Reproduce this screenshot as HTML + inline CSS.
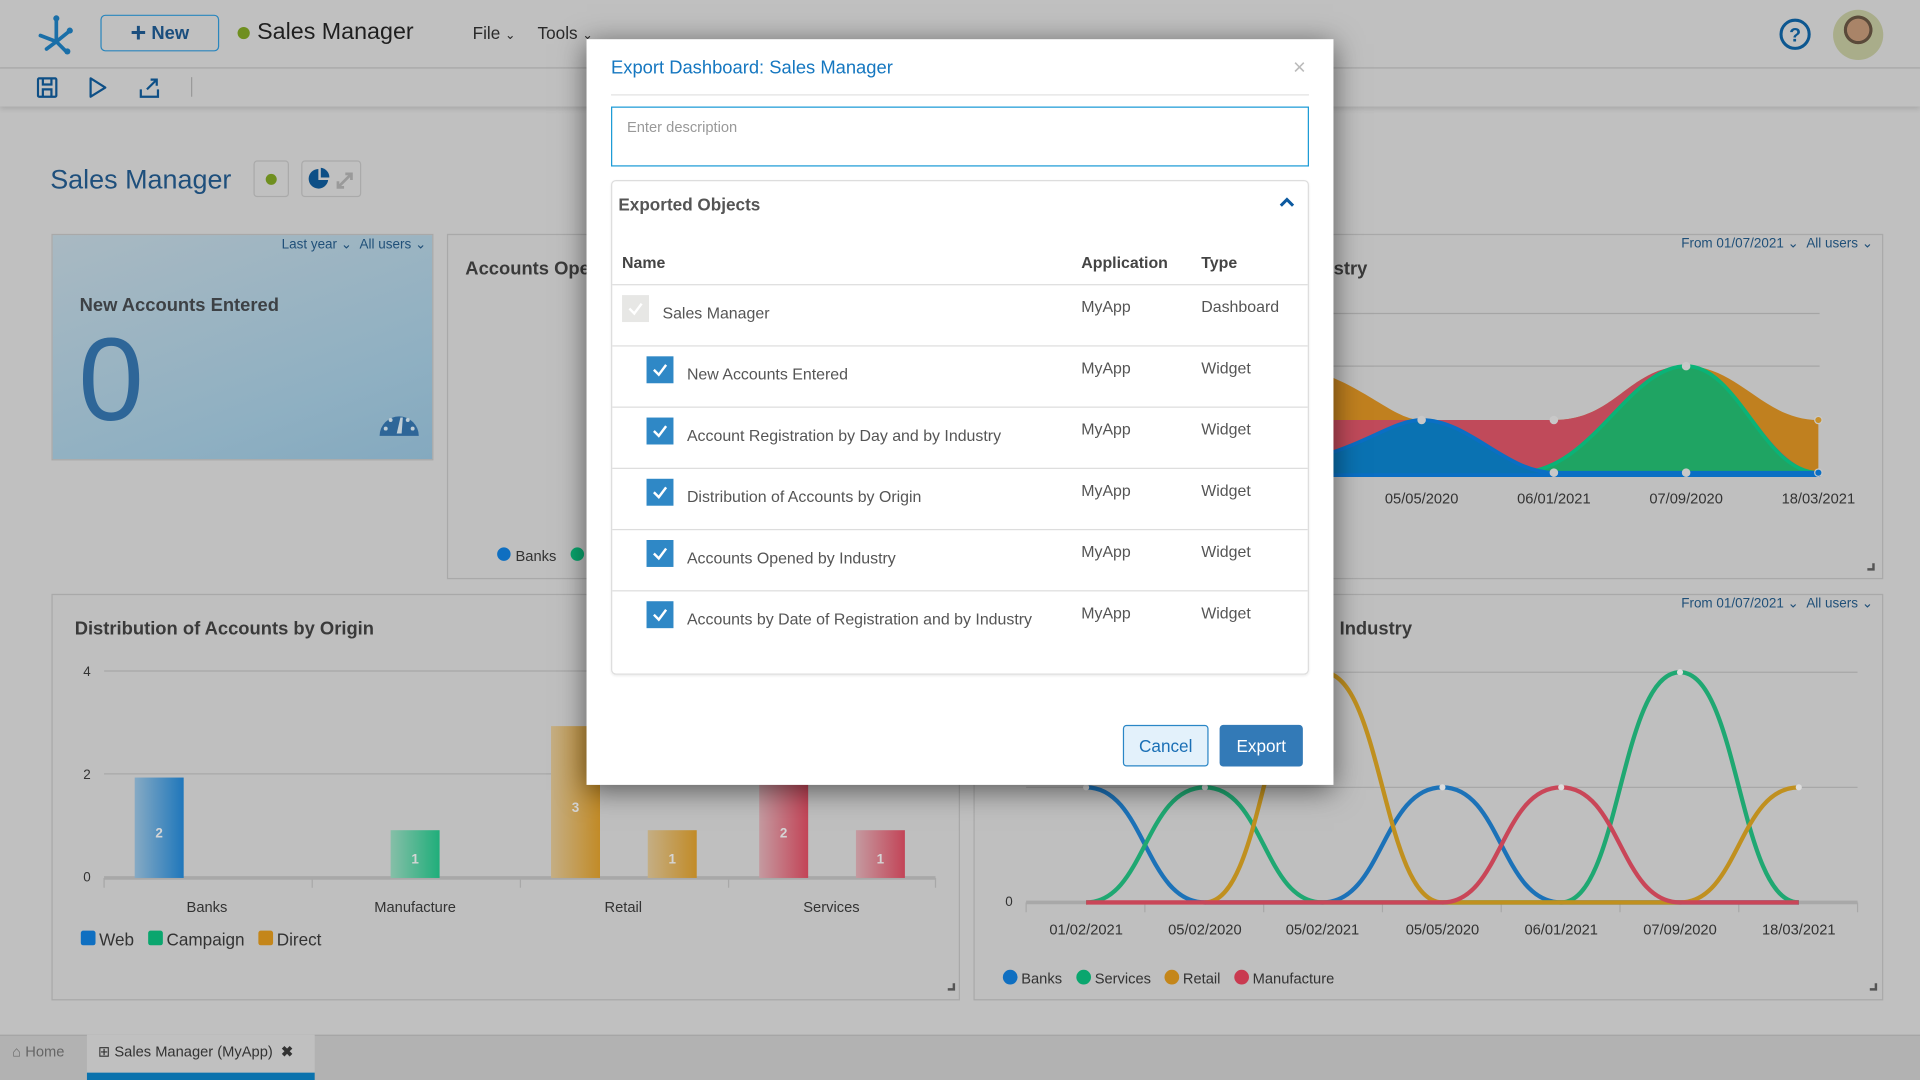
<!DOCTYPE html>
<html><head><meta charset="utf-8">
<style>
*{box-sizing:border-box;margin:0;padding:0}
html,body{width:1920px;height:1080px;overflow:hidden;background:#c0c0c0}
#w{position:absolute;left:0;top:0;width:1568px;height:882px;transform:scale(1.22449);transform-origin:0 0;background:#c0c0c0;font-family:"Liberation Sans",Arial,sans-serif;color:#333}
.a{position:absolute}
.box{position:absolute;border:1px solid #a9a9a9;background:#bfbfbf}
.lnk{position:absolute;font-size:11px;color:#1f4f78;white-space:nowrap}
.wt{position:absolute;font-size:15px;font-weight:bold;color:#3a3a3a;white-space:nowrap}
#modal{position:absolute;left:479px;top:32px;width:610px;height:609px;background:#fff;box-shadow:0 4px 22px rgba(0,0,0,.55)}
.row{position:absolute;left:0;width:568px;height:50px;border-top:1px solid #ddd;font-size:13px;color:#555;white-space:nowrap}
.cb{position:absolute;width:22px;height:22px;background:#2f88c6}
.cb svg{position:absolute;left:4px;top:5px}
.app{position:absolute;left:383px;top:10px}
.typ{position:absolute;left:481px;top:10px}
</style></head><body><div id="w">

<!-- top bar -->
<div class="a" style="left:0;top:55px;width:1568px;height:1px;background:#a8a8a8"></div>
<div class="a" style="left:0;top:56px;width:1568px;height:31px;background:#c0c0c0;box-shadow:0 2px 4px rgba(0,0,0,.12)"></div>
<svg class="a" style="left:28px;top:12px" width="36" height="34" viewBox="0 0 36 34">
<g stroke="#1a6fa8" stroke-width="3" fill="none" stroke-linecap="round"><path d="M18 3 V22"/><path d="M18 22 L5 17"/><path d="M18 22 L28 14"/><path d="M18 22 L26 30"/><path d="M18 22 L10 28"/></g>
<circle cx="18" cy="3" r="2.5" fill="#1a6fa8"/><circle cx="29" cy="13" r="2.5" fill="#1a6fa8"/><circle cx="27" cy="30" r="2.5" fill="#1a6fa8"/></svg>
<div class="a" style="left:82px;top:12px;width:97px;height:30px;border:1px solid #2a86bd;border-radius:4px;color:#1a4e7e;font-size:15px;line-height:28px;text-align:center;font-weight:bold"><span style="font-size:22px;vertical-align:-2px">+</span> New</div>
<div class="a" style="left:194px;top:22px;width:10px;height:10px;border-radius:50%;background:#6f8f1f"></div>
<div class="a" style="left:210px;top:16px;font-size:19px;color:#1f1f1f">Sales Manager</div>
<div class="a" style="left:386px;top:19px;font-size:14px;color:#2a2a2a">File <span style="font-size:10px">&#8964;</span></div>
<div class="a" style="left:439px;top:19px;font-size:14px;color:#2a2a2a">Tools <span style="font-size:10px">&#8964;</span></div>
<svg class="a" style="left:1452px;top:14px" width="28" height="28"><circle cx="14" cy="14" r="11.5" stroke="#0d5790" stroke-width="2.5" fill="none"/><text x="14" y="20" text-anchor="middle" font-size="16" font-weight="bold" fill="#0d5790" font-family="Liberation Sans">?</text></svg>
<div class="a" style="left:1497px;top:8px;width:41px;height:41px;border-radius:50%;background:radial-gradient(circle at 50% 40%,#a98468 0 28%,#5a4a3a 29% 36%,#a9ad8a 37%)"></div>
<!-- toolbar icons -->
<svg class="a" style="left:30px;top:62px" width="110" height="20"><g stroke="#0e4f86" stroke-width="1.8" fill="none"><rect x="1" y="2" width="15" height="15" rx="1"/><path d="M5 2v5h7V2M5 17v-6h7v6"/><path d="M44 2 L56 9.5 L44 17 Z" stroke-linejoin="round"/><path d="M85 11v6h14v-6M90 11 L98 3M93 3h5v5"/></g></svg>
<div class="a" style="left:156px;top:63px;width:1px;height:16px;background:#999"></div>

<!-- dashboard title -->
<div class="a" style="left:41px;top:134px;font-size:22px;color:#1e4f7c">Sales Manager</div>
<div class="a" style="left:207px;top:131px;width:29px;height:30px;border:1px solid #aaa;border-radius:3px"><div class="a" style="left:9px;top:10px;width:9px;height:9px;border-radius:50%;background:#6f8f1f"></div></div>
<div class="a" style="left:246px;top:131px;width:49px;height:30px;border:1px solid #aaa;border-radius:3px">
<svg class="a" style="left:2px;top:3px" width="42" height="22"><path d="M11 3 A8 8 0 1 0 19 12 L11 12 Z" fill="#0d4f86"/><path d="M13 2 A8 8 0 0 1 20 10 L13 10 Z" fill="#0d4f86"/><g stroke="#9a9a9a" stroke-width="2.2" fill="none"><path d="M27 18 L38 7M27 13v5h5M38 12V7h-5"/></g></svg></div>

<!-- widget 1 -->
<div class="box" style="left:42px;top:191px;width:312px;height:185px;background:linear-gradient(160deg,#a9b9c2,#8fb0c2 70%,#84a9bf)">
<div class="lnk" style="left:187px;top:1px">Last year &#8964; &nbsp;All users &#8964;</div>
<div class="wt" style="left:22px;top:49px;color:#3d4145">New Accounts Entered</div>
<div class="a" style="left:21px;top:64px;font-size:96px;color:#2e6698;line-height:110px">0</div>
<svg class="a" style="left:266px;top:138px" width="34" height="30"><path d="M1 26 A16 16 0 0 1 33 26 Z" fill="#2e6698"/><g fill="#bfcdd5"><circle cx="6" cy="20" r="1.6"/><circle cx="10" cy="13" r="1.6"/><circle cx="24" cy="13" r="1.6"/><circle cx="28" cy="20" r="1.6"/><path d="M15 24 L18 11 L20 11 L19 24 Z"/></g></svg>
</div>
<!-- widget 2 top middle / right -->
<div class="box" style="left:365px;top:191px;width:1173px;height:282px"></div>
<div class="wt" style="left:380px;top:211px">Accounts Ope</div>
<div class="a" style="left:406px;top:447px;width:11px;height:11px;border-radius:50%;background:#0f6fc1"></div>
<div class="a" style="left:421px;top:447px;font-size:12px">Banks</div>
<div class="a" style="left:466px;top:447px;width:11px;height:11px;border-radius:50%;background:#0aa66e"></div>
<div class="wt" style="left:1080px;top:211px">ustry</div>
<div class="lnk" style="left:1373px;top:192px">From 01/07/2021 &#8964; &nbsp;All users &#8964;</div>
<svg class="a" style="left:1000px;top:240px" width="540" height="240">
<g stroke="#a5a5a5" stroke-width="1"><path d="M89 16 H486 M89 59 H486"/></g>
<path d="M80 65 C120 80 140 103 161 103 L269 103 C320 103 330 59 377 59 C420 59 440 103 485 103 L485 146 L80 146 Z" fill="#c0801f"/>
<path d="M80 103 L161 103 L269 103 C320 103 330 59 377 59 C420 59 440 140 485 146 L80 146 Z" fill="#c04a5a"/>
<path d="M240 146 C300 146 330 59 377 59 C420 59 440 146 485 146 Z" fill="#1fa463" stroke="#0ab377" stroke-width="3"/>
<path d="M80 132 C120 120 140 103 161 103 C200 103 230 146 269 146 L485 146 L485 148 L80 148 Z" fill="#0a72b2" stroke="#0a6fc4" stroke-width="3"/>
<g fill="#c8c8c8" stroke="#c8c8c8"><circle cx="161" cy="103" r="3"/><circle cx="269" cy="103" r="3"/><circle cx="269" cy="146" r="3"/><circle cx="377" cy="59" r="3"/><circle cx="377" cy="146" r="3"/><circle cx="485" cy="103" r="3" fill="#c8902a"/><circle cx="485" cy="146" r="3" fill="#0a6fc4"/></g>
<g font-size="12" fill="#333" font-family="Liberation Sans" text-anchor="middle"><text x="161" y="171">05/05/2020</text><text x="269" y="171">06/01/2021</text><text x="377" y="171">07/09/2020</text><text x="485" y="171">18/03/2021</text></g>
<path d="M525 225h5v-5" stroke="#555" stroke-width="2" fill="none"/>
</svg>

<!-- bottom left bar chart -->
<div class="box" style="left:42px;top:485px;width:742px;height:332px"></div>
<div class="wt" style="left:61px;top:505px">Distribution of Accounts by Origin</div>
<svg class="a" style="left:42px;top:485px" width="742" height="332">
<g stroke="#a8a8a8"><path d="M43 63 H720 M43 147 H720"/><path d="M43 232 H722" stroke-width="3"/><path d="M43 232v8M213 232v8M383 232v8M553 232v8M722 232v8"/></g>
<g font-size="11" fill="#333" font-family="Liberation Sans"><text x="26" y="67">4</text><text x="26" y="151">2</text><text x="26" y="235">0</text></g>
<defs>
<linearGradient id="gb"><stop offset="0" stop-color="#86aac4"/><stop offset="1" stop-color="#1f77bb"/></linearGradient>
<linearGradient id="gg"><stop offset="0" stop-color="#86bfa8"/><stop offset="1" stop-color="#1fae7a"/></linearGradient>
<linearGradient id="go"><stop offset="0" stop-color="#c4ae84"/><stop offset="1" stop-color="#c28b27"/></linearGradient>
<linearGradient id="gr"><stop offset="0" stop-color="#c49aa0"/><stop offset="1" stop-color="#c34457"/></linearGradient></defs>
<rect x="68" y="150" width="40" height="82" fill="url(#gb)"/>
<rect x="277" y="193" width="40" height="39" fill="url(#gg)"/>
<rect x="408" y="108" width="40" height="124" fill="url(#go)"/>
<rect x="487" y="193" width="40" height="39" fill="url(#go)"/>
<rect x="578" y="147" width="40" height="85" fill="url(#gr)"/>
<rect x="657" y="193" width="40" height="39" fill="url(#gr)"/>
<g font-size="11" font-weight="bold" fill="#d5d5d5" font-family="Liberation Sans" text-anchor="middle"><text x="88" y="199">2</text><text x="297" y="220">1</text><text x="428" y="178">3</text><text x="507" y="220">1</text><text x="598" y="199">2</text><text x="677" y="220">1</text></g>
<g font-size="12" fill="#333" font-family="Liberation Sans" text-anchor="middle"><text x="127" y="260">Banks</text><text x="297" y="260">Manufacture</text><text x="467" y="260">Retail</text><text x="637" y="260">Services</text></g>
<rect x="24" y="275" width="12" height="12" rx="2" fill="#0f6fc1"/><rect x="79" y="275" width="12" height="12" rx="2" fill="#0aa66e"/><rect x="169" y="275" width="12" height="12" rx="2" fill="#c4861a"/>
<g font-size="14" fill="#333" font-family="Liberation Sans"><text x="39" y="287">Web</text><text x="94" y="287">Campaign</text><text x="184" y="287">Direct</text></g>
<path d="M732 323h5v-5" stroke="#555" stroke-width="2" fill="none"/>
</svg>

<!-- bottom right line chart -->
<div class="box" style="left:795px;top:485px;width:743px;height:332px"></div>
<div class="wt" style="left:1094px;top:505px">Industry</div>
<div class="lnk" style="left:1373px;top:486px">From 01/07/2021 &#8964; &nbsp;All users &#8964;</div>
<svg class="a" style="left:795px;top:485px" width="743" height="332">
<g stroke="#a8a8a8"><path d="M43 64 H722 M43 158 H722"/><path d="M43 252 H722" stroke-width="3"/><path d="M43 252v8M140 252v8M237 252v8M334 252v8M431 252v8M528 252v8M625 252v8M722 252v8"/></g>
<g font-size="11" fill="#333" font-family="Liberation Sans"><text x="26" y="255">0</text></g>
<g fill="none" stroke-width="3.5">
<path d="M92 158 C140 158 140 252 189 252 L285 252 C334 252 334 158 383 158 C431 158 431 252 480 252 L674 252" stroke="#1c72b8"/>
<path d="M92 252 C140 252 140 158 189 158 C237 158 237 252 285 252 L480 252 C528 252 528 64 577 64 C625 64 625 252 674 252" stroke="#1fa872"/>
<path d="M189 252 C237 252 237 64 285 64 C334 64 334 252 383 252 L577 252 C625 252 625 158 674 158" stroke="#c0901f"/>
<path d="M92 252 L383 252 C431 252 431 158 480 158 C528 158 528 252 577 252 L674 252" stroke="#c94658"/>
</g>
<g fill="#ddd"><circle cx="92" cy="158" r="2.5"/><circle cx="189" cy="158" r="2.5"/><circle cx="383" cy="158" r="2.5"/><circle cx="480" cy="158" r="2.5"/><circle cx="577" cy="64" r="2.5"/><circle cx="674" cy="158" r="2.5"/></g>
<g font-size="12" fill="#333" font-family="Liberation Sans" text-anchor="middle"><text x="92" y="278">01/02/2021</text><text x="189" y="278">05/02/2020</text><text x="285" y="278">05/02/2021</text><text x="383" y="278">05/05/2020</text><text x="480" y="278">06/01/2021</text><text x="577" y="278">07/09/2020</text><text x="674" y="278">18/03/2021</text></g>
<circle cx="30" cy="313" r="6" fill="#0f6fc1"/><circle cx="90" cy="313" r="6" fill="#0aa66e"/><circle cx="162" cy="313" r="6" fill="#c4861a"/><circle cx="219" cy="313" r="6" fill="#c93a50"/>
<g font-size="12" fill="#333" font-family="Liberation Sans"><text x="39" y="318">Banks</text><text x="99" y="318">Services</text><text x="171" y="318">Retail</text><text x="228" y="318">Manufacture</text></g>
<path d="M732 323h5v-5" stroke="#555" stroke-width="2" fill="none"/>
</svg>

<!-- bottom tabs -->
<div class="a" style="left:0;top:845px;width:1568px;height:37px;background:#b2b2b2;border-top:1px solid #a5a5a5"></div>
<div class="a" style="left:10px;top:852px;font-size:12px;color:#666">&#8962; Home</div>
<div class="a" style="left:71px;top:845px;width:186px;height:37px;background:#c0c0c0;border-bottom:6px solid #0a72ad"></div>
<div class="a" style="left:80px;top:852px;font-size:12px;color:#333;white-space:nowrap">&#8862; Sales Manager (MyApp) &nbsp;<b>&#10006;</b></div>

<!-- modal -->
<div id="modal">
<div class="a" style="left:20px;top:15px;font-size:15px;color:#1577c0">Export Dashboard: Sales Manager</div>
<div class="a" style="left:577px;top:13px;font-size:18px;color:#bbb">&#215;</div>
<div class="a" style="left:20px;top:45px;width:570px;height:1px;background:#e2e2e2"></div>
<div class="a" style="left:20px;top:55px;width:570px;height:49px;border:1px solid #1a9ad6"><div class="a" style="left:12px;top:9px;font-size:12px;color:#999">Enter description</div></div>
<div class="a" style="left:20px;top:115px;width:570px;height:404px;border:1px solid #ddd;border-radius:4px;box-shadow:0 1px 2px rgba(0,0,0,.08)">
<div class="a" style="left:5px;top:11px;font-size:14px;font-weight:bold;color:#555">Exported Objects</div>
<svg class="a" style="left:544px;top:12px" width="14" height="10"><path d="M2 8 L7 3 L12 8" stroke="#0d5aa0" stroke-width="2.5" fill="none"/></svg>
<div class="a" style="left:8px;top:59px;font-size:13px;font-weight:bold;color:#444">Name</div>
<div class="a" style="left:383px;top:59px;font-size:13px;font-weight:bold;color:#444">Application</div>
<div class="a" style="left:481px;top:59px;font-size:13px;font-weight:bold;color:#444">Type</div>
<div class="row" style="top:84px"><div class="cb" style="left:8px;top:8px;background:#e7e7e5"><svg width="14" height="12"><path d="M2 6 L6 10 L12 2" stroke="#fff" stroke-width="2" fill="none"/></svg></div><div class="a" style="left:41px;top:15px">Sales Manager</div><div class="app">MyApp</div><div class="typ">Dashboard</div></div>
<div class="row" style="top:134px"><div class="cb" style="left:28px;top:8px"><svg width="14" height="12"><path d="M2 6 L6 10 L12 2" stroke="#fff" stroke-width="2" fill="none"/></svg></div><div class="a" style="left:61px;top:15px">New Accounts Entered</div><div class="app">MyApp</div><div class="typ">Widget</div></div>
<div class="row" style="top:184px"><div class="cb" style="left:28px;top:8px"><svg width="14" height="12"><path d="M2 6 L6 10 L12 2" stroke="#fff" stroke-width="2" fill="none"/></svg></div><div class="a" style="left:61px;top:15px">Account Registration by Day and by Industry</div><div class="app">MyApp</div><div class="typ">Widget</div></div>
<div class="row" style="top:234px"><div class="cb" style="left:28px;top:8px"><svg width="14" height="12"><path d="M2 6 L6 10 L12 2" stroke="#fff" stroke-width="2" fill="none"/></svg></div><div class="a" style="left:61px;top:15px">Distribution of Accounts by Origin</div><div class="app">MyApp</div><div class="typ">Widget</div></div>
<div class="row" style="top:284px"><div class="cb" style="left:28px;top:8px"><svg width="14" height="12"><path d="M2 6 L6 10 L12 2" stroke="#fff" stroke-width="2" fill="none"/></svg></div><div class="a" style="left:61px;top:15px">Accounts Opened by Industry</div><div class="app">MyApp</div><div class="typ">Widget</div></div>
<div class="row" style="top:334px"><div class="cb" style="left:28px;top:8px"><svg width="14" height="12"><path d="M2 6 L6 10 L12 2" stroke="#fff" stroke-width="2" fill="none"/></svg></div><div class="a" style="left:61px;top:15px">Accounts by Date of Registration and by Industry</div><div class="app">MyApp</div><div class="typ">Widget</div></div>
</div>
<div class="a" style="left:438px;top:560px;width:70px;height:34px;border:1px solid #2a86c6;border-radius:3px;background:#e3f1fb;color:#1a6fb5;font-size:14px;text-align:center;line-height:32px">Cancel</div>
<div class="a" style="left:517px;top:560px;width:68px;height:34px;border-radius:3px;background:#337ab7;color:#fff;font-size:14px;text-align:center;line-height:34px">Export</div>
</div>
</div></body></html>
